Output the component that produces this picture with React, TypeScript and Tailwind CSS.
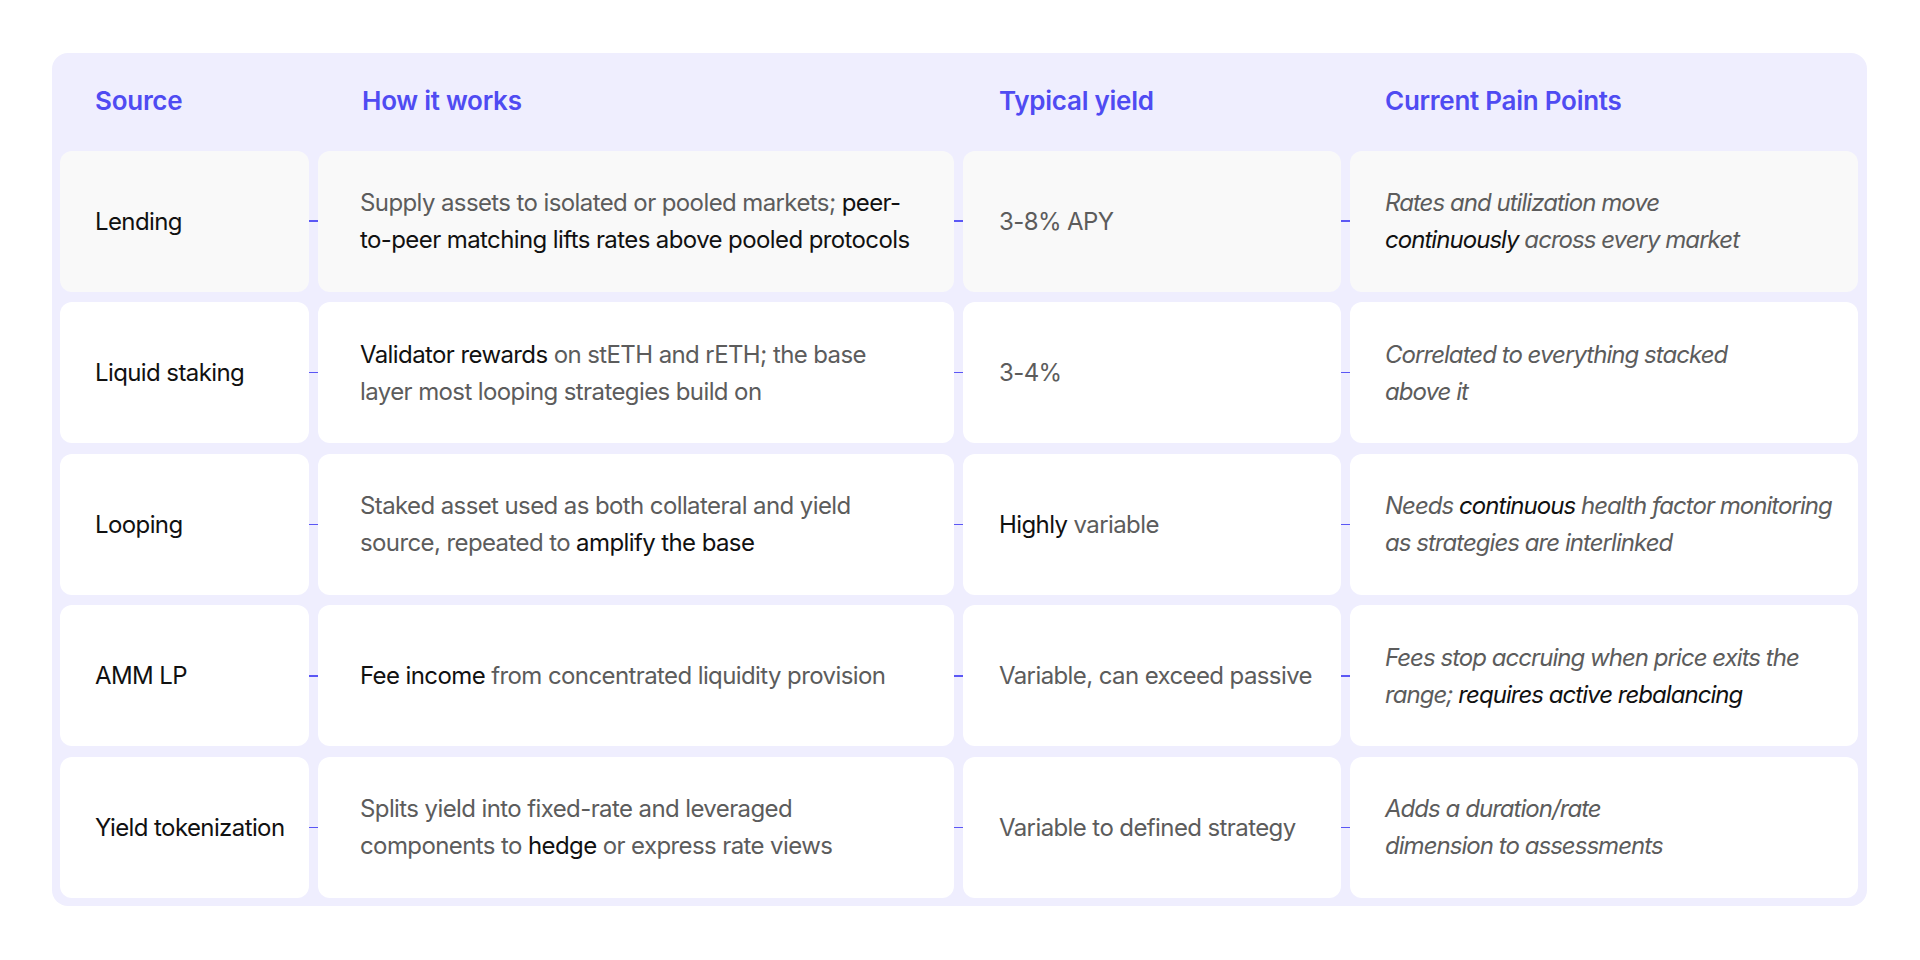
import React from 'react';

type Part = { t: string; dark?: boolean };
type Line = Part[];

type Row = {
  source: string;
  how: Line[];
  yieldText: Line[];
  pain: Line[];
};

const g = (t: string): Part => ({ t });
const d = (t: string): Part => ({ t, dark: true });

const rows: Row[] = [
  {
    source: 'Lending',
    how: [
      [g('Supply assets to isolated or pooled markets; '), d('peer-')],
      [d('to-peer matching lifts rates above pooled protocols')],
    ],
    yieldText: [[g('3-8% APY')]],
    pain: [[g('Rates and utilization move')], [d('continuously'), g(' across every market')]],
  },
  {
    source: 'Liquid staking',
    how: [
      [d('Validator rewards'), g(' on stETH and rETH; the base')],
      [g('layer most looping strategies build on')],
    ],
    yieldText: [[g('3-4%')]],
    pain: [[g('Correlated to everything stacked')], [g('above it')]],
  },
  {
    source: 'Looping',
    how: [
      [g('Staked asset used as both collateral and yield')],
      [g('source, repeated to '), d('amplify the base')],
    ],
    yieldText: [[d('Highly'), g(' variable')]],
    pain: [
      [g('Needs '), d('continuous'), g(' health factor monitoring')],
      [g('as strategies are interlinked')],
    ],
  },
  {
    source: 'AMM LP',
    how: [[d('Fee income'), g(' from concentrated liquidity provision')]],
    yieldText: [[g('Variable, can exceed passive')]],
    pain: [
      [g('Fees stop accruing when price exits the')],
      [g('range; '), d('requires active rebalancing')],
    ],
  },
  {
    source: 'Yield tokenization',
    how: [
      [g('Splits yield into fixed-rate and leveraged')],
      [g('components to '), d('hedge'), g(' or express rate views')],
    ],
    yieldText: [[g('Variable to defined strategy')]],
    pain: [[g('Adds a duration/rate')], [g('dimension to assessments')]],
  },
];

const Lines = ({ lines }: { lines: Line[] }) => (
  <div className="flex flex-col">
    {lines.map((line, i) => (
      <div key={i} className="whitespace-nowrap">
        {line.map((p, j) => (
          <span key={j} className={p.dark ? 'text-[#111111]' : 'text-[#5c5c5c]'}>
            {p.t}
          </span>
        ))}
      </div>
    ))}
  </div>
);

// little blue tick that joins two cards
const Connector = () => (
  <div className="flex items-center">
    <div className="h-[1.5px] w-full bg-[#5b57f5]" />
  </div>
);

const App = () => {
  return (
    <div
      className="w-[1920px] h-[960px] bg-white pt-[53px] pl-[52px]"
      style={{ fontFamily: 'Inter, "Noto Sans", sans-serif' }}
    >
      <div className="w-[1815px] rounded-2xl bg-[#efeefe] px-2 pt-2 pb-2">
        <div className="grid grid-cols-[249px_9px_636px_9px_378px_9px_508px] gap-y-[10.6px]">
          {/* Header */}
          <div className="col-span-7 grid grid-cols-[249px_9px_636px_9px_378px_9px_508px] h-[79px] items-center text-[26px] font-semibold tracking-[-0.01em] text-[#4f4bf2]">
            <div className="pl-[35px]">Source</div>
            <div />
            <div className="pl-[44px]">How it works</div>
            <div />
            <div className="pl-[36px]">Typical yield</div>
            <div />
            <div className="pl-[35px]">Current Pain Points</div>
          </div>

          {/* Rows */}
          {rows.map((row, idx) => {
            const bg = idx === 0 ? 'bg-[#f9f9f9]' : 'bg-white';
            return (
              <React.Fragment key={row.source}>
                <div className={`${bg} h-[141px] rounded-xl flex items-center pl-[35px] text-[24px] leading-[37px] tracking-[-0.025em] text-[#111111]`}>
                  {row.source}
                </div>
                <Connector />
                <div className={`${bg} h-[141px] rounded-xl flex items-center pl-[42px] text-[24px] leading-[37px] tracking-[-0.025em]`}>
                  <Lines lines={row.how} />
                </div>
                <Connector />
                <div className={`${bg} h-[141px] rounded-xl flex items-center pl-[36px] text-[24px] leading-[37px] tracking-[-0.025em]`}>
                  <Lines lines={row.yieldText} />
                </div>
                <Connector />
                <div className={`${bg} h-[141px] rounded-xl flex items-center pl-[35px] text-[24px] leading-[37px] tracking-[-0.04em] italic`}>
                  <Lines lines={row.pain} />
                </div>
              </React.Fragment>
            );
          })}
        </div>
      </div>
    </div>
  );
};

export default App;
